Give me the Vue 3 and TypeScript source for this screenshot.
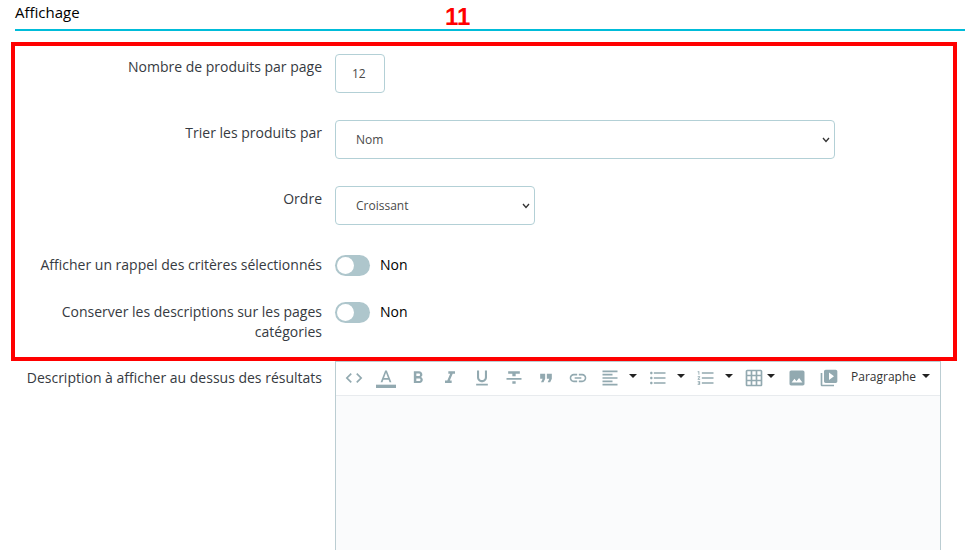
<script setup lang="ts">
import { ref } from 'vue'

interface Tool {
  name: string
  path: string
  menu?: boolean
  tight?: boolean
  bar?: boolean
}

const perPage = ref('12')
const sortBy = ref('Nom')
const order = ref('Croissant')
const showReminder = ref(false)
const keepDescriptions = ref(false)
const description = ref('')

const tools: Tool[] = [
  { name: 'Code source', path: 'M9.4 16.6L4.8 12l4.6-4.6L8 6l-6 6 6 6 1.4-1.4zm5.2 0l4.6-4.6-4.6-4.6L16 6l6 6-6 6-1.4-1.4z' },
  { name: 'Couleur du texte', bar: true, path: 'M11 3L5.5 17h2.25l1.12-3h6.25l1.12 3h2.25L13 3h-2zm-1.38 9L12 5.67 14.38 12H9.62z' },
  { name: 'Gras', path: 'M15.6 10.79c.97-.67 1.65-1.77 1.65-2.79 0-2.26-1.75-4-4-4H7v14h7.04c2.09 0 3.71-1.7 3.71-3.79 0-1.52-.86-2.82-2.15-3.42zM10 6.5h3c.83 0 1.5.67 1.5 1.5s-.67 1.5-1.5 1.5h-3v-3zm3.5 9H10v-3h3.5c.83 0 1.5.67 1.5 1.5s-.67 1.5-1.5 1.5z' },
  { name: 'Italique', path: 'M10 4v3h2.21l-3.42 8H6v3h8v-3h-2.21l3.42-8H18V4z' },
  { name: 'Souligné', path: 'M12 17c3.31 0 6-2.69 6-6V3h-2.5v8c0 1.93-1.57 3.5-3.5 3.5S8.5 12.93 8.5 11V3H6v8c0 3.31 2.69 6 6 6zm-7 2v2h14v-2H5z' },
  { name: 'Barré', path: 'M10 19h4v-3h-4v3zM5 4v3h5v3h4V7h5V4H5zM3 14h18v-2H3v2z' },
  { name: 'Citation', path: 'M6 17h3l2-4V7H5v6h3zm8 0h3l2-4V7h-6v6h3z' },
  { name: 'Lien', path: 'M3.9 12c0-1.71 1.39-3.1 3.1-3.1h4V7H7c-2.76 0-5 2.24-5 5s2.24 5 5 5h4v-1.9H7c-1.71 0-3.1-1.39-3.1-3.1zM8 13h8v-2H8v2zm9-6h-4v1.9h4c1.71 0 3.1 1.39 3.1 3.1s-1.39 3.1-3.1 3.1h-4V17h4c2.76 0 5-2.24 5-5s-2.24-5-5-5z' },
  { name: 'Alignement', menu: true, path: 'M15 15H3v2h12v-2zm0-8H3v2h12V7zM3 13h18v-2H3v2zm0 8h18v-2H3v2zM3 3v2h18V3H3z' },
  { name: 'Liste à puces', menu: true, path: 'M4 10.5c-.83 0-1.5.67-1.5 1.5s.67 1.5 1.5 1.5 1.5-.67 1.5-1.5-.67-1.5-1.5-1.5zm0-6c-.83 0-1.5.67-1.5 1.5S3.17 7.5 4 7.5 5.5 6.83 5.5 6 4.83 4.5 4 4.5zm0 12c-.83 0-1.5.68-1.5 1.5s.68 1.5 1.5 1.5 1.5-.68 1.5-1.5-.67-1.5-1.5-1.5zM7 19h14v-2H7v2zm0-6h14v-2H7v2zm0-8v2h14V5H7z' },
  { name: 'Liste numérotée', menu: true, path: 'M2 17h2v.5H3v1h1v.5H2v1h3v-4H2v1zm1-9h1V4H2v1h1v3zm-1 3h1.8L2 13.1v.9h3v-1H3.2L5 10.9V10H2v1zm5-6v2h14V5H7zm0 14h14v-2H7v2zm0-6h14v-2H7v2z' },
  { name: 'Tableau', menu: true, tight: true, path: 'M20 2H4c-1.1 0-2 .9-2 2v16c0 1.1.9 2 2 2h16c1.1 0 2-.9 2-2V4c0-1.1-.9-2-2-2zM8 20H4v-4h4v4zm0-6H4v-4h4v4zm0-6H4V4h4v4zm6 12h-4v-4h4v4zm0-6h-4v-4h4v4zm0-6h-4V4h4v4zm6 12h-4v-4h4v4zm0-6h-4v-4h4v4zm0-6h-4V4h4v4z' },
  { name: 'Image', path: 'M21 19V5c0-1.1-.9-2-2-2H5c-1.1 0-2 .9-2 2v14c0 1.1.9 2 2 2h14c1.1 0 2-.9 2-2zM9 13l2.3 2.8L14.5 12l4 5.5h-13L9 13z' },
  { name: 'Vidéo', path: 'M4 6H2v14c0 1.1.9 2 2 2h14v-2H4V6zm16-4H8c-1.1 0-2 .9-2 2v12c0 1.1.9 2 2 2h12c1.1 0 2-.9 2-2V4c0-1.1-.9-2-2-2zm-8 12.5v-9l6 4.5-6 4.5z' },
]
</script>

<template>
  <form class="page" @submit.prevent>
    <header class="title">
      <h2>Affichage</h2>
      <span class="marker">11</span>
    </header>

    <section class="frame">
      <div class="row">
        <label class="label" for="per-page">Nombre de produits par page</label>
        <input id="per-page" v-model="perPage" class="field small" type="text" inputmode="numeric" />
      </div>
      <div class="row">
        <label class="label" for="sort-by">Trier les produits par</label>
        <div class="picker large">
          <select id="sort-by" v-model="sortBy" class="field">
            <option>Nom</option>
            <option>Prix</option>
          </select>
          <svg class="chevron" viewBox="0 0 8 6" aria-hidden="true"><path d="M1 1l3 3.5L7 1" /></svg>
        </div>
      </div>
      <div class="row">
        <label class="label" for="order">Ordre</label>
        <div class="picker medium">
          <select id="order" v-model="order" class="field">
            <option>Croissant</option>
            <option>Décroissant</option>
          </select>
          <svg class="chevron" viewBox="0 0 8 6" aria-hidden="true"><path d="M1 1l3 3.5L7 1" /></svg>
        </div>
      </div>
      <div class="row">
        <label class="label" for="reminder">Afficher un rappel des critères sélectionnés</label>
        <div class="toggle">
          <input id="reminder" v-model="showReminder" type="checkbox" role="switch" />
          <span>{{ showReminder ? 'Oui' : 'Non' }}</span>
        </div>
      </div>
      <div class="row">
        <label class="label" for="keep">Conserver les descriptions sur les pages catégories</label>
        <div class="toggle">
          <input id="keep" v-model="keepDescriptions" type="checkbox" role="switch" />
          <span>{{ keepDescriptions ? 'Oui' : 'Non' }}</span>
        </div>
      </div>
    </section>

    <section class="row description">
      <label class="label" for="description">Description à afficher au dessus des résultats</label>
      <div class="editor">
        <div class="toolbar" role="toolbar">
          <button
            v-for="tool in tools"
            :key="tool.name"
            type="button"
            class="tool"
            :class="{ menu: tool.menu, tight: tool.tight }"
            :aria-label="tool.name"
          >
            <svg class="icon" viewBox="0 0 24 24" aria-hidden="true">
              <path :d="tool.path" />
              <rect v-if="tool.bar" y="20" width="24" height="4" />
            </svg>
            <span v-if="tool.menu" class="caret"></span>
          </button>
          <button type="button" class="tool format">Paragraphe<span class="caret"></span></button>
        </div>
        <textarea id="description" v-model="description" class="content"></textarea>
      </div>
    </section>
  </form>
</template>

<style>
body {
  margin: 0;
  background: #fff;
}
</style>

<style scoped>
.page {
  display: flex;
  flex-direction: column;
  box-sizing: border-box;
  min-height: 100vh;
  font-family: 'Open Sans', 'Noto Sans', sans-serif;
  font-size: 14px;
  line-height: 20px;
  color: #363a41;
}

.title {
  position: relative;
  margin: 0 10px 11px 15px;
  padding: 2px 0 7px;
  border-bottom: 2px solid #00bcd9;
}

.title h2 {
  margin: 0;
  font-size: 15px;
  font-weight: 400;
  line-height: 20px;
  color: #000;
}

.marker {
  position: absolute;
  top: 3px;
  left: 430px;
  font-family: 'Liberation Sans', Arial, sans-serif;
  font-size: 24px;
  font-weight: 700;
  line-height: 28px;
  color: #f00;
}

.frame {
  display: flex;
  flex-direction: column;
  gap: 23px;
  margin: 0 18px 0 11px;
  padding: 8px 0 15px;
  border: 4px solid #f00;
}

.row {
  display: grid;
  grid-template-columns: 307px minmax(0, 1fr);
  column-gap: 13px;
  align-items: start;
}

.label {
  padding-top: 3px;
  text-align: right;
}

.field {
  box-sizing: border-box;
  width: 100%;
  height: 39px;
  margin: 0;
  padding: 0 16px;
  border: 1px solid #b3d0d6;
  border-radius: 4px;
  background-color: #fff;
  font-family: inherit;
  font-size: 12px;
  color: #4a4a4a;
}

.picker {
  display: grid;
  align-items: center;
  margin-bottom: 4px;
}

.picker > * {
  grid-area: 1 / 1;
}

.picker .field {
  appearance: none;
  padding: 0 20px;
}

.chevron {
  justify-self: end;
  width: 8px;
  height: 6px;
  margin-right: 5px;
  fill: none;
  stroke: #333;
  stroke-width: 1.3;
  pointer-events: none;
}

.small {
  max-width: 50px;
  margin-bottom: 4px;
}

.medium {
  max-width: 200px;
}

.large {
  max-width: 500px;
}

.toggle {
  display: flex;
  align-items: flex-start;
  gap: 10px;
  height: 21px;
  padding-top: 3px;
  color: #000;
}

.toggle input {
  appearance: none;
  box-sizing: border-box;
  width: 35px;
  height: 21px;
  margin: 0;
  padding: 2px;
  border-radius: 11px;
  background: #aec6cc;
}

.toggle input::before {
  content: '';
  display: block;
  width: 17px;
  height: 17px;
  border-radius: 50%;
  background: #fff;
}

.toggle input:checked::before {
  margin-left: auto;
}

.description {
  flex: 1;
  align-items: stretch;
  margin: 0 34px 0 15px;
}

.description .label {
  padding-top: 7px;
}

.editor {
  display: flex;
  flex-direction: column;
  border: 1px solid #bbcdd2;
  border-bottom: 0;
}

.toolbar {
  display: flex;
  padding: 0 2px 1px;
  border-bottom: 1px solid #e8ebee;
  background: #fff;
}

.tool {
  display: flex;
  flex: none;
  align-items: center;
  width: 32px;
  height: 32px;
  padding: 0 6px;
  border: 0;
  background: none;
  font-family: inherit;
  font-size: 12px;
  color: #333;
}

.icon {
  flex: none;
  width: 20px;
  height: 20px;
  fill: #92a9b0;
}

.menu {
  gap: 9px;
  width: 48px;
}

.tight {
  gap: 3px;
  width: 43px;
}

.caret {
  flex: none;
  border: 4px solid transparent;
  border-top-color: #222;
  border-bottom: 0;
}

.menu .caret {
  margin-bottom: 4px;
}

.format {
  gap: 6px;
  width: auto;
  padding-bottom: 4px;
}

.content {
  flex: 1;
  min-height: 154px;
  box-sizing: border-box;
  width: 100%;
  padding: 8px;
  border: 0;
  outline: 0;
  background: #fafbfc;
  font: inherit;
  resize: none;
}
</style>
